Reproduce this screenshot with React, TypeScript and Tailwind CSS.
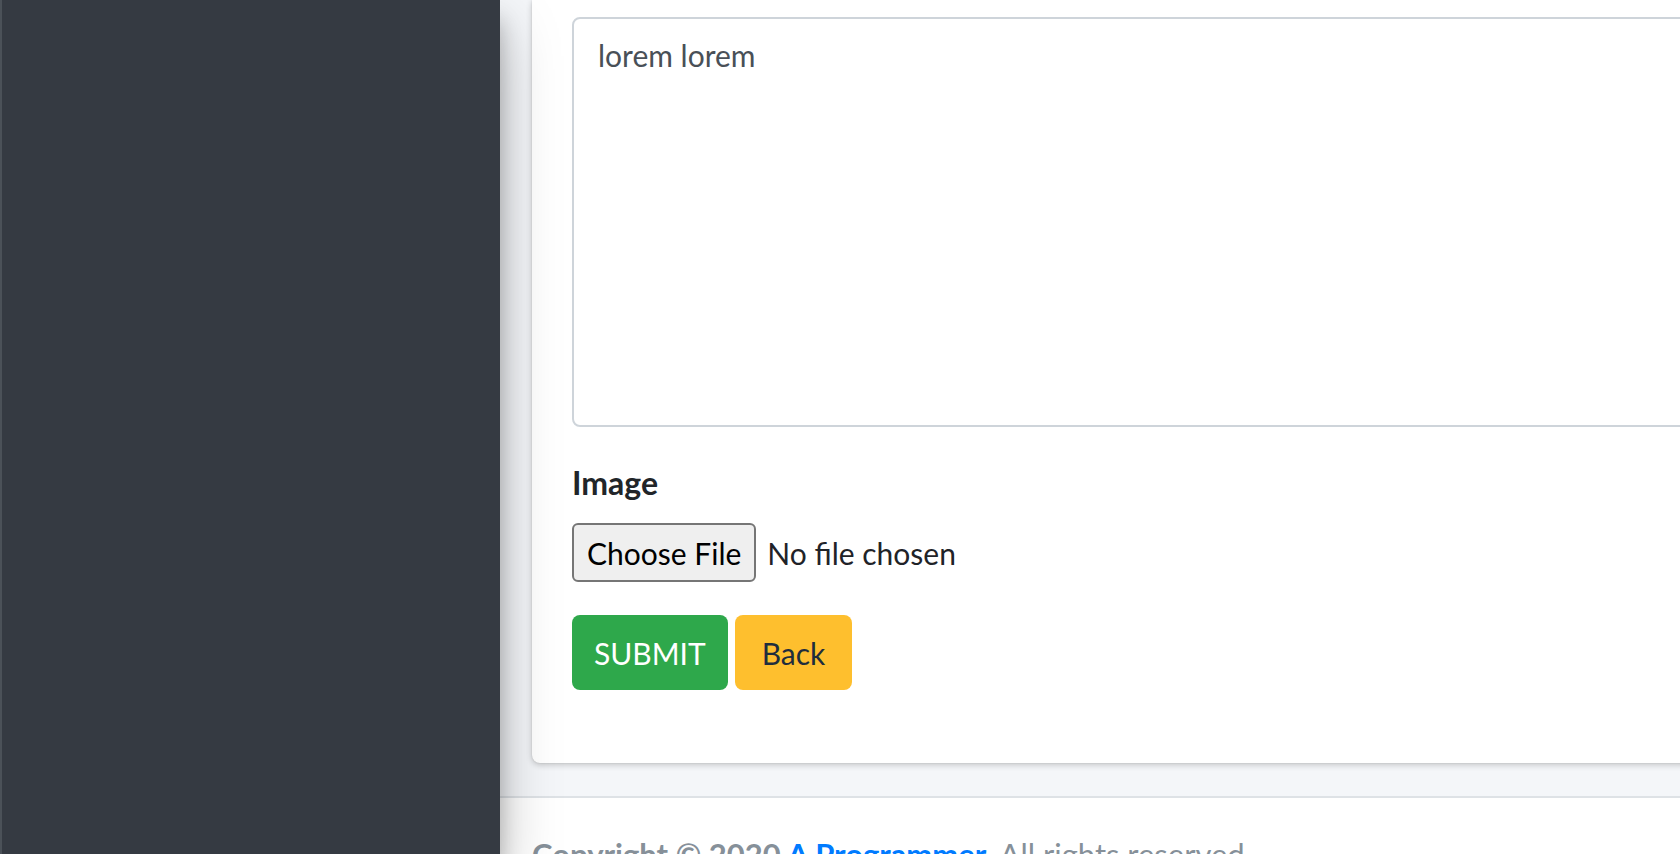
import { type PropsWithChildren } from "react";

const FormGroup = ({ children, className = "" }: PropsWithChildren<{ className?: string }>) => (
  <div className={"flex flex-col " + className}>{children}</div>
)

const FakeFileInput = () => (
  <div className="flex items-center h-[59px]">
    <span className="flex items-center h-[59px] px-[13px] bg-[#efefef] border-2 border-[#767676] rounded-[6px] text-black whitespace-nowrap">
      Choose File
    </span>
    <span className="ml-[11px] text-[#1f2328] whitespace-nowrap">No file chosen</span>
  </div>
)

export default function App() {
  return <div className="flex h-[854px] w-full overflow-hidden font-['Lato','Liberation_Sans',sans-serif] text-[30px] leading-[48px]">
    {/* sidebar, nothing visible in it at this scroll position */}
    <aside className="relative z-10 w-[500px] shrink-0 bg-[#353a42] border-l-2 border-[#4b5158] shadow-[0_28px_56px_rgba(0,0,0,0.25),0_20px_20px_rgba(0,0,0,0.22)]" />

    <div className="flex flex-col flex-1 min-w-0 bg-[#f4f6f9]">
      <main className="pl-[32px]">
        <div className="w-[1400px] bg-white rounded-b-[8px] shadow-[0_0_2px_rgba(0,0,0,0.125),0_2px_6px_rgba(0,0,0,0.2)] px-[40px] pt-[17px] pb-[73px] mb-[33px]">
          <textarea
            readOnly
            defaultValue="lorem lorem"
            className="block w-full h-[410px] resize-none border-2 border-[#ced4da] rounded-[8px] px-[24px] py-[12px] text-[#495057] bg-white outline-none"
          />

          <FormGroup className="mt-[32px]">
            <label className="font-bold text-[32px] text-[#212529] mb-[16px]">Image</label>
            <FakeFileInput />
          </FormGroup>

          <div className="flex gap-[7px] mt-[33px]">
            <button className="h-[75px] px-[22px] rounded-[8px] bg-[#2ea84b] text-white">SUBMIT</button>
            <button className="h-[75px] px-[27px] rounded-[8px] bg-[#febf2e] text-[#1f2d3d]">Back</button>
          </div>
        </div>
      </main>

      <footer className="flex-1 bg-white border-t-2 border-[#dee2e6] px-[32px] pt-[32px] text-[31px] text-[#869099] whitespace-nowrap">
        <strong>Copyright © 2020 <a className="text-[#007bff]">A Programmer</a>.</strong> All rights reserved.
      </footer>
    </div>
  </div>
}
